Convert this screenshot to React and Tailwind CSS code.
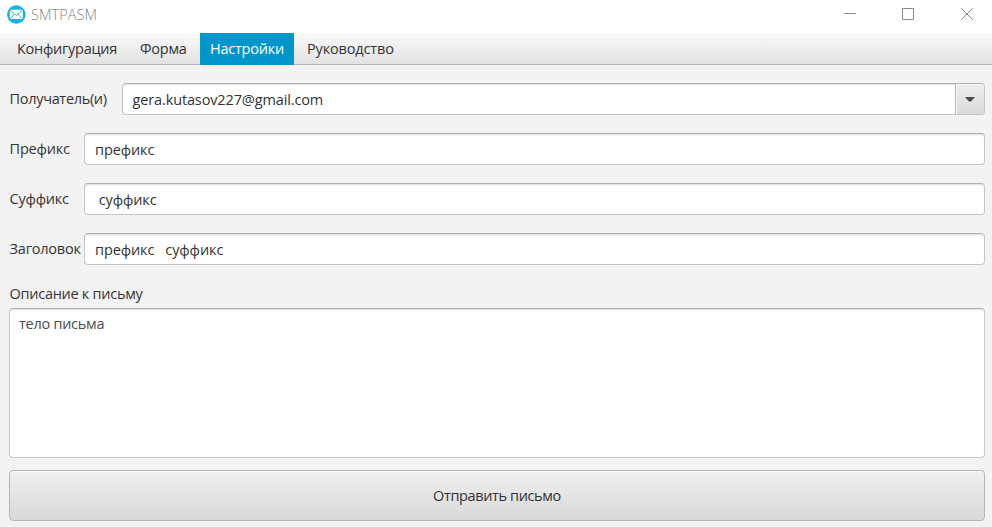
const fieldBox =
  'flex h-8 flex-1 items-center rounded-[4px] border border-[#c6c6c6] border-t-[#b0b0b0] bg-white shadow-[inset_0_2px_2px_-1px_#dcdcdc]';

function MailLogo() {
  return (
    <svg className="ml-[7px] h-[19px] w-[19px]" viewBox="0 0 19 19" fill="none">
      <circle cx="9.3" cy="9.5" r="9.3" fill="#1bb1e7" />
      <rect x="2.8" y="4.7" width="13" height="9.4" rx="1" fill="#fff" />
      <path d="M3.2 5.2l6.1 5.3 6.1-5.3M3.4 13.7l4.2-4.4M15.2 13.7l-4.2-4.4" stroke="#1bb1e7" strokeWidth="0.9" />
    </svg>
  );
}

function TitleBar() {
  return (
    <header className="flex h-[33px] items-start bg-white">
      <div className="flex h-[29px] flex-1 items-center">
        <MailLogo />
        <span className="ml-[5px] text-[14.5px] font-light tracking-[0.05px] text-[#858585]">SMTPASM</span>
      </div>
      <svg className="mt-[7px] mr-[18px] h-[14px] w-[130px]" viewBox="0 0 130 14" fill="none" stroke="#8a8a8a">
        <path d="M0 6.5h12" />
        <path d="M58.5 1.5h11v11h-11z" />
        <path d="M117.2 1.2l11.6 11.6M128.8 1.2l-11.6 11.6" />
      </svg>
    </header>
  );
}

function MenuBar() {
  return (
    <nav className="flex h-8 items-stretch border-b border-[#b3b3b3] bg-linear-to-b from-[#fafafa] to-[#e2e2e2] pl-[7px] leading-[31px]">
      <span className="w-[123px] pl-[10px] tracking-[-0.25px]">Конфигурация</span>
      <span className="w-[70px] pl-[10px] tracking-[-0.25px]">Форма</span>
      <span className="-mb-px w-[94px] bg-[#0096c9] pl-[10px] tracking-[-0.23px] text-white">Настройки</span>
      <span className="pl-[13px] tracking-[-0.15px]">Руководство</span>
    </nav>
  );
}

function Field({ label, value }) {
  return (
    <div className="mb-[18px] flex h-8">
      <label className="w-[75px] shrink-0 pl-[0.6px] leading-[31px] tracking-[-0.22px]">{label}</label>
      <div className={`${fieldBox} pt-px pl-[10px] tracking-[-0.1px] whitespace-pre`}>{value}</div>
    </div>
  );
}

export default function App() {
  return (
    <div className="flex h-[527px] w-[992px] flex-col overflow-hidden bg-[#f3f3f3] font-['Open_Sans','Noto_Sans',sans-serif] text-[14.5px] whitespace-nowrap text-[#333]">
      <TitleBar />
      <MenuBar />
      <main className="flex flex-1 flex-col pt-[18px] pr-[7px] pl-[9px]">
        <div className="mb-[18px] flex h-8">
          <label className="w-[113px] shrink-0 pl-[0.6px] leading-[31px] tracking-[-0.32px]">Получатель(и)</label>
          <div className={fieldBox}>
            <span className="flex-1 pt-px pl-[9.5px] tracking-[-0.13px]">gera.kutasov227@gmail.com</span>
            <div className="flex h-full w-[29px] items-center justify-center rounded-r-[3px] border-l border-[#b9b9b9] bg-linear-to-b from-[#efefef] to-[#dadada] shadow-[inset_1px_1px_0_#f8f8f8]">
              <svg className="h-[5px] w-[10px]" viewBox="0 0 10 5">
                <path d="M0 0h10L6 4.5H4z" fill="#4a4a4a" />
              </svg>
            </div>
          </div>
        </div>
        <Field label="Префикс" value="префикс" />
        <Field label="Суффикс" value=" суффикс" />
        <Field label="Заголовок" value="префикс   суффикс" />
        <div className="mt-px h-[24px] pl-[0.6px] leading-[20px] tracking-[-0.28px]">Описание к письму</div>
        <div className="h-[150px] shrink-0 rounded-[4px] border border-[#c8c8c8] border-t-[#b0b0b0] bg-white pt-[5px] pl-[9px] leading-[20px] tracking-[-0.27px] text-[#4c4c4c] shadow-[inset_0_2px_2px_-1px_#dcdcdc]">
          тело письма
        </div>
        <button className="mt-3 flex h-[51px] shrink-0 items-center justify-center rounded-[4px] border border-[#b5b5b5] bg-linear-to-b from-[#efefef] to-[#d9d9d9] tracking-[-0.37px] shadow-[inset_0_1px_0_#f8f8f8]">
          Отправить письмо
        </button>
      </main>
    </div>
  );
}
